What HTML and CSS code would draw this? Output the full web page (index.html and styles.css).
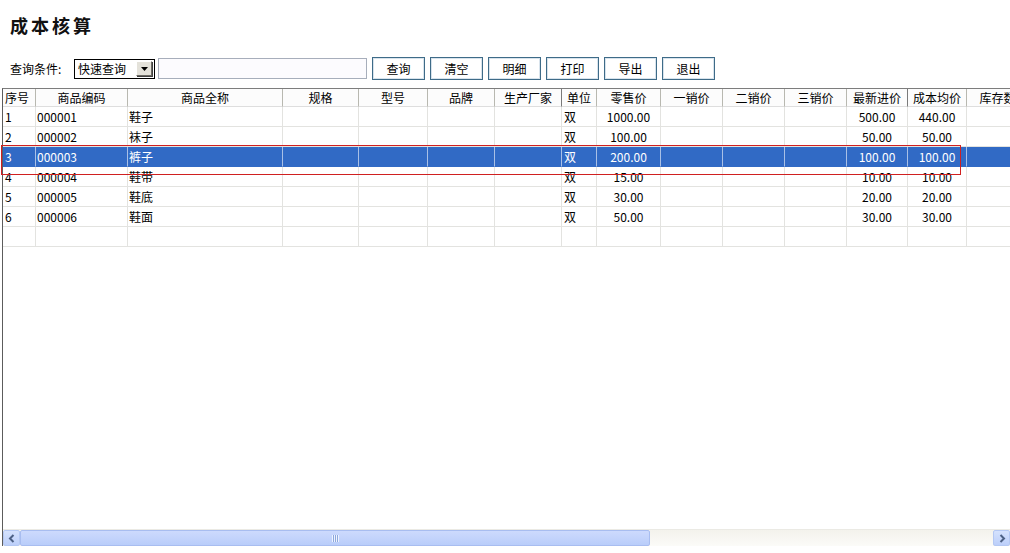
FILE: index.html
```html
<!DOCTYPE html>
<html lang="zh-CN">
<head>
<meta charset="utf-8">
<title>成本核算</title>
<link rel="stylesheet" href="styles.css">
</head>
<body>
<h1 class="title">成本核算</h1>
<div class="toolbar">
  <span class="label">查询条件:</span>
  <div class="select">
    <span class="select-text">快速查询</span>
    <span class="select-btn"><svg width="7" height="4" viewBox="0 0 7 4"><polygon points="0,0 7,0 3.5,4" fill="#000"/></svg></span>
  </div>
  <div class="textbox"></div>
  <div class="buttons">
    <span class="btn">查询</span>
    <span class="btn">清空</span>
    <span class="btn">明细</span>
    <span class="btn">打印</span>
    <span class="btn">导出</span>
    <span class="btn">退出</span>
  </div>
</div>
<div class="grid-wrap">
  <div class="grid-frame">
    <div class="grid-body">
      <div class="row head">
        <div class="c first">序号</div><div class="c">商品编码</div><div class="c">商品全称</div><div class="c">规格</div><div class="c">型号</div><div class="c">品牌</div><div class="c">生产厂家</div><div class="c">单位</div><div class="c">零售价</div><div class="c">一销价</div><div class="c">二销价</div><div class="c">三销价</div><div class="c">最新进价</div><div class="c">成本均价</div><div class="c">库存数量</div>
      </div>
      <div class="row">
        <div class="c l">1</div><div class="c l">000001</div><div class="c l">鞋子</div><div class="c"></div><div class="c"></div><div class="c"></div><div class="c"></div><div class="c l">双</div><div class="c">1000.00</div><div class="c"></div><div class="c"></div><div class="c"></div><div class="c">500.00</div><div class="c">440.00</div><div class="c"></div>
      </div>
      <div class="row">
        <div class="c l">2</div><div class="c l">000002</div><div class="c l">袜子</div><div class="c"></div><div class="c"></div><div class="c"></div><div class="c"></div><div class="c l">双</div><div class="c">100.00</div><div class="c"></div><div class="c"></div><div class="c"></div><div class="c">50.00</div><div class="c">50.00</div><div class="c"></div>
      </div>
      <div class="row sel">
        <div class="c l">3</div><div class="c l">000003</div><div class="c l">裤子</div><div class="c"></div><div class="c"></div><div class="c"></div><div class="c"></div><div class="c l">双</div><div class="c">200.00</div><div class="c"></div><div class="c"></div><div class="c"></div><div class="c">100.00</div><div class="c">100.00</div><div class="c"></div>
      </div>
      <div class="row">
        <div class="c l">4</div><div class="c l">000004</div><div class="c l">鞋带</div><div class="c"></div><div class="c"></div><div class="c"></div><div class="c"></div><div class="c l">双</div><div class="c">15.00</div><div class="c"></div><div class="c"></div><div class="c"></div><div class="c">10.00</div><div class="c">10.00</div><div class="c"></div>
      </div>
      <div class="row">
        <div class="c l">5</div><div class="c l">000005</div><div class="c l">鞋底</div><div class="c"></div><div class="c"></div><div class="c"></div><div class="c"></div><div class="c l">双</div><div class="c">30.00</div><div class="c"></div><div class="c"></div><div class="c"></div><div class="c">20.00</div><div class="c">20.00</div><div class="c"></div>
      </div>
      <div class="row">
        <div class="c l">6</div><div class="c l">000006</div><div class="c l">鞋面</div><div class="c"></div><div class="c"></div><div class="c"></div><div class="c"></div><div class="c l">双</div><div class="c">50.00</div><div class="c"></div><div class="c"></div><div class="c"></div><div class="c">30.00</div><div class="c">30.00</div><div class="c"></div>
      </div>
      <div class="row">
        <div class="c"></div><div class="c"></div><div class="c"></div><div class="c"></div><div class="c"></div><div class="c"></div><div class="c"></div><div class="c"></div><div class="c"></div><div class="c"></div><div class="c"></div><div class="c"></div><div class="c"></div><div class="c"></div><div class="c"></div>
      </div>
    </div>
    <div class="hscroll">
      <div class="sb-btn"><svg width="8" height="9" viewBox="0 0 8 9"><polyline points="5.5,1 2,4.5 5.5,8" fill="none" stroke="#4d6185" stroke-width="2"/></svg></div>
      <div class="sb-thumb"><span class="grip"></span></div>
      <div class="sb-track"></div>
      <div class="sb-btn"><svg width="8" height="9" viewBox="0 0 8 9"><polyline points="2.5,1 6,4.5 2.5,8" fill="none" stroke="#4d6185" stroke-width="2"/></svg></div>
    </div>
  </div>
  <div class="highlight"></div>
</div>
</body>
</html>
```

FILE: styles.css
```css
* { box-sizing: border-box; }
html, body { margin: 0; padding: 0; background: #fff; }
body {
  width: 1010px;
  height: 553px;
  overflow: hidden;
  font-family: "Noto Sans CJK SC", "Liberation Sans", sans-serif;
  font-size: 12px;
  color: #000;
}
.title {
  margin: 13px 0 0 10px;
  height: 24px;
  line-height: 24px;
  font-size: 18px;
  font-weight: bold;
  letter-spacing: 3px;
  color: #111;
}
.toolbar {
  margin-top: 20px;
  height: 23px;
  display: flex;
  align-items: center;
  padding-left: 10px;
}
.label { width: 64px; line-height: 16px; }
.select {
  width: 81px;
  height: 20px;
  border: 1px solid #000;
  display: flex;
  align-items: center;
  justify-content: space-between;
  padding: 0 2px 0 3px;
  background: #fff;
}
.select-text { line-height: 16px; }
.select-btn {
  width: 16px;
  height: 15px;
  background: #e4e2da;
  border: 1px solid;
  border-color: #fff #6c6a64 #6c6a64 #fff;
  box-shadow: 1px 1px 0 #404040;
  display: flex;
  align-items: center;
  justify-content: center;
}
.textbox {
  margin-left: 3px;
  width: 209px;
  height: 21px;
  border: 1px solid #a7aebb;
  background: #fcfbfe;
}
.buttons { display: flex; gap: 5px; margin-left: 5px; }
.btn {
  width: 53px;
  height: 23px;
  border: 1px solid #3e6b88;
  box-shadow: inset 0 0 0 1px #d8e3ec;
  background: #fff;
  display: flex;
  align-items: center;
  justify-content: center;
  line-height: 16px;
}
.grid-wrap {
  position: relative;
  margin-top: 8px;
}
.grid-frame {
  margin-left: 2px;
  width: 1008px;
  border-top: 1px solid #7d7d7d;
  border-left: 1px solid #5c5c5c;
  overflow: hidden;
}
.grid-body {
  height: 440px;
  overflow: hidden;
}
.row {
  display: grid;
  grid-template-columns: 33px 92px 155px 76px 69px 67px 67px 35px 64px 62px 62px 62px 61px 59px 74px;
  width: 1038px;
  height: 20px;
}
.c {
  border-right: 1px solid #e3e3e0;
  border-bottom: 1px solid #e3e3e0;
  line-height: 19px;
  text-align: center;
  white-space: nowrap;
  overflow: hidden;
}
.c.l { text-align: left; padding-left: 1px; }
.row .c.l:first-child, .row .c.l:nth-child(8) { padding-left: 2px; }
.head { height: 18px; background: #fcfcfc; }
.head .c {
  line-height: 17px;
  border-right-color: #b8b8b0;
  border-bottom-color: #dedede;
}
.head .c.first { text-align: left; padding-left: 2px; }
.head .c:nth-child(7), .head .c:nth-child(13) { border-right-color: #7a7a7a; }
.sel { background: #316ac5; color: #fff; }
.sel .c { border-right-color: #a9c0e6; border-bottom-color: #316ac5; }
.hscroll {
  height: 17px;
  display: flex;
  background: #f5f4ef;
  border-top: 1px solid #ebeae4;
}
.sb-btn {
  width: 17px;
  height: 16px;
  background: linear-gradient(#d5e2fd, #bccffa);
  border: 1px solid #b4c8f3;
  border-radius: 2px;
  display: flex;
  align-items: center;
  justify-content: center;
}
.sb-thumb {
  width: 630px;
  height: 16px;
  background: linear-gradient(#cddafd, #b9cdfa);
  border: 1px solid #a8bdf0;
  border-radius: 2px;
  display: flex;
  align-items: center;
  justify-content: center;
}
.grip {
  width: 7px;
  height: 7px;
  background: repeating-linear-gradient(90deg, #eef3ff 0 1px, #8ea8dc 1px 2px);
}
.sb-track { flex: 1; background: linear-gradient(#f3f2ec, #fbfbf8); }
.highlight {
  position: absolute;
  left: 1px;
  top: 57px;
  width: 960px;
  height: 30px;
  border: 1px solid #d02020;
}
```
